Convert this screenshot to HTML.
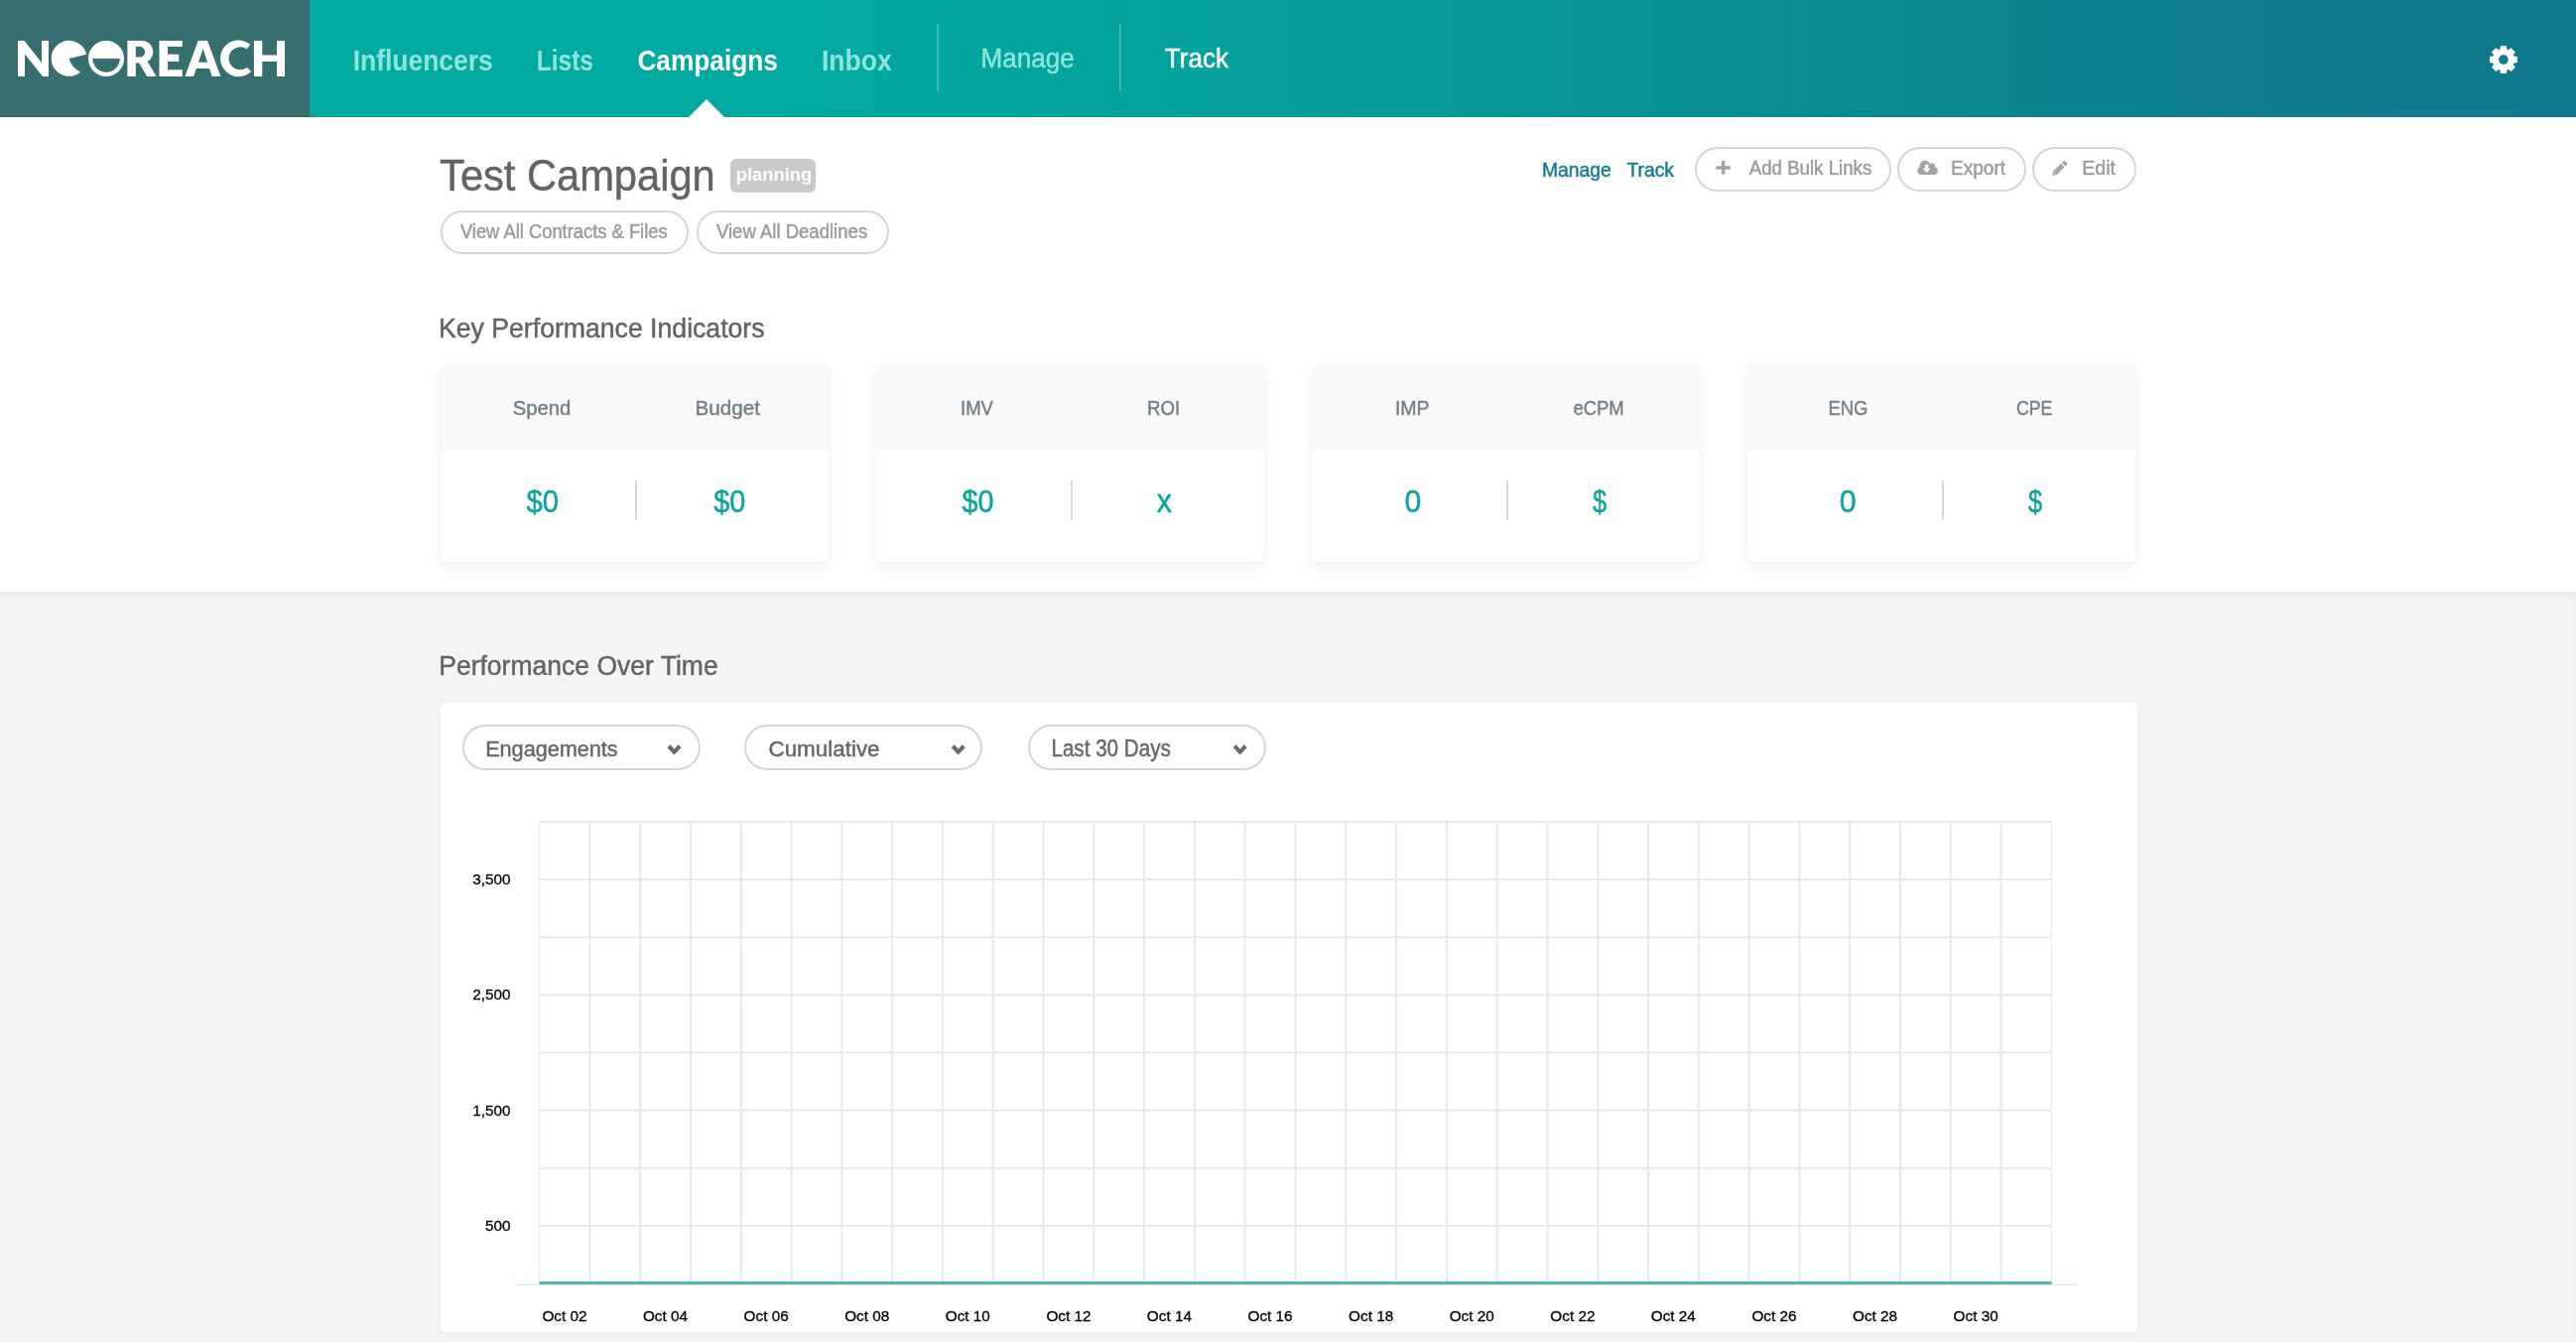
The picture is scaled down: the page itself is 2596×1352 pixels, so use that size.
<!DOCTYPE html>
<html><head><meta charset="utf-8"><title>NeoReach - Test Campaign</title>
<style>
html,body{margin:0;padding:0;width:2596px;height:1352px;overflow:hidden;background:#fff;font-family:"Liberation Sans",sans-serif}
.a{position:absolute}
.pill{position:absolute;box-sizing:border-box;border:2px solid #d5d5d5;border-radius:40px;background:#fff}
.card{position:absolute;width:391px;height:198px;top:368px;border-radius:5px;background:#fff;box-shadow:0 5px 12px rgba(0,0,0,0.06),0 1px 3px rgba(0,0,0,0.03);overflow:hidden}
.card .hd{position:absolute;left:0;top:0;width:100%;height:86px;background:#f9f9f9}
.card .sep{position:absolute;left:196px;top:116px;width:2px;height:40px;background:#d6d6d6}
</style></head><body>
<div class="a" style="left:0;top:0;width:2596px;height:118px;background:linear-gradient(90deg,#00aaa0 0px,#00aaa0 780px,#05a09b 1300px,#0b8a93 1900px,#0f7c8e 2300px,#10798d 2596px)"></div>
<div class="a" style="left:0;top:117px;width:2596px;height:1px;background:rgba(0,0,0,0.06)"></div>
<div class="a" style="left:0;top:0;width:312px;height:118px;background:#376f71"></div>
<div class="a" style="left:0;top:117px;width:312px;height:1px;background:#2b6063"></div>
<div class="a" style="left:944px;top:24px;width:2px;height:68px;background:rgba(255,255,255,0.22)"></div>
<div class="a" style="left:1128px;top:24px;width:2px;height:68px;background:rgba(255,255,255,0.22)"></div>

<div class="a" style="left:0;top:596px;width:2596px;height:756px;background:#f4f4f4;box-shadow:inset 0 6px 8px -4px rgba(0,0,0,0.08)"></div>

<div class="a" style="left:736px;top:160px;width:86px;height:34px;border-radius:6px;background:#cacaca"></div>
<div class="pill" style="left:444px;top:212px;width:250px;height:44px"></div>
<div class="pill" style="left:702px;top:212px;width:194px;height:44px"></div>
<div class="pill" style="left:1708px;top:148px;width:198px;height:45px"></div>
<div class="pill" style="left:1912px;top:148px;width:130px;height:45px"></div>
<div class="pill" style="left:2048px;top:148px;width:105px;height:45px"></div>

<div class="card" style="left:444px"><div class="hd"></div><div class="sep"></div></div>
<div class="card" style="left:883px"><div class="hd"></div><div class="sep"></div></div>
<div class="card" style="left:1322px"><div class="hd"></div><div class="sep"></div></div>
<div class="card" style="left:1761px"><div class="hd"></div><div class="sep"></div></div>

<div class="a" style="left:444px;top:708px;width:1710px;height:634px;background:#fff;border-radius:5px;box-shadow:0 3px 6px rgba(0,0,0,0.05)"></div>
<div class="pill" style="left:466px;top:730px;width:240px;height:46px"></div>
<div class="pill" style="left:750px;top:730px;width:240px;height:46px"></div>
<div class="pill" style="left:1036px;top:730px;width:240px;height:46px"></div>

<svg class="a" style="left:0;top:0;will-change:transform" width="2596" height="1352" viewBox="0 0 2596 1352" font-family="Liberation Sans, sans-serif">
<defs>
<mask id="gm"><rect x="2490" y="30" width="70" height="60" fill="#fff"/><circle cx="2522.9" cy="60.1" r="4.8" fill="#000"/></mask>
</defs>
<!-- logo -->
<g fill="#ffffff">
<path d="M18,41 L24.5,41 L42,63.2 L42,41 L49,41 L49,77 L43,77 L25,54.5 L25,77 L18,77 Z"/>
<path d="M69.6,59 L87.2,54.8 A18 18 0 1 0 81.3,72.6 Q72.5,69 69.6,59 Z"/>
<path fill-rule="evenodd" d="M89,59 A18 18 0 1 0 125,59 A18 18 0 1 0 89,59 Z M93.4,59 L120.8,59 A13.7 13.7 0 0 1 93.4,59 Z"/>
<path fill-rule="evenodd" d="M128.4,41 H143 A11.3 11.3 0 0 1 148.6,62.1 L157.6,77 H148.2 L140.3,63.6 H136.8 V77 H128.4 Z M136.8,47.1 H141 A5.25 5.25 0 0 1 141,57.6 H136.8 Z"/>
<path d="M160.5,41 H183.7 V47.1 H169 V54.8 H180.2 V62.1 H169 V70.2 H183.7 V77 H160.5 Z"/>
<path fill-rule="evenodd" d="M199.7,41 H209.1 L222.4,77 H213.6 L211,69.1 H197.9 L195.1,77 H186.4 Z M204.6,48.9 L209.1,62.8 H200 Z"/>
<path d="M252.2,44.8 A18.35 18.35 0 1 0 253.2,72 L249,67.9 A11.5 11.5 0 1 1 248.6,49.4 Z"/>
<path d="M255.9,41 H264.3 V55.5 H279 V41 H287 V77 H279 V62.1 H264.3 V77 H255.9 Z"/>
</g>
<!-- nav caret -->
<path d="M694,118 L712,100 L730,118 Z" fill="#ffffff"/>
<!-- gear -->
<path d="M2519.36,49.68 L2519.92,46.22 L2525.88,46.22 L2526.44,49.68 L2527.76,50.23 L2530.61,48.18 L2534.82,52.39 L2532.77,55.24 L2533.32,56.56 L2536.78,57.12 L2536.78,63.08 L2533.32,63.64 L2532.77,64.96 L2534.82,67.81 L2530.61,72.02 L2527.76,69.97 L2526.44,70.52 L2525.88,73.98 L2519.92,73.98 L2519.36,70.52 L2518.04,69.97 L2515.19,72.02 L2510.98,67.81 L2513.03,64.96 L2512.48,63.64 L2509.02,63.08 L2509.02,57.12 L2512.48,56.56 L2513.03,55.24 L2510.98,52.39 L2515.19,48.18 L2518.04,50.23 Z" fill="#ffffff" mask="url(#gm)"/>
<!-- button icons -->
<g fill="#a2a2a2">
<rect x="1729.4" y="167.2" width="14.4" height="3.5" rx="0.8"/>
<rect x="1734.9" y="161.9" width="3.4" height="13.9" rx="0.8"/>
</g>
<g>
<path fill="#a2a2a2" d="M1936.3,175.9 A3.8 3.8 0 0 1 1934.6,168.6 A5.6 5.6 0 0 1 1945.3,165.4 A2.6 2.6 0 0 1 1949.6,168.3 A3.8 3.8 0 0 1 1948,175.9 Z"/>
<path fill="#ffffff" d="M1939.8,165.8 H1943.4 V169.7 H1945.4 L1941.6,174.1 L1937.6,169.7 H1939.8 Z"/>
</g>
<g transform="translate(2068.3,176.9) rotate(-45)">
<path fill="#a2a2a2" d="M0,0 L4,-2.6 L14.7,-2.6 L14.7,2.6 L4,2.6 Z"/>
<path fill="#a2a2a2" d="M15.8,-2.6 L18,-2.6 Q19.2,-2.6 19.2,-1.4 L19.2,1.4 Q19.2,2.6 18,2.6 L15.8,2.6 Z"/>
<line x1="3.7" y1="-1.3" x2="3.7" y2="1.3" stroke="#ffffff" stroke-width="0.9"/>
<line x1="5.5" y1="-1.2" x2="13.5" y2="-1.2" stroke="#b4b4b4" stroke-width="0.6"/>
</g>
<!-- chevrons -->
<g fill="#696b6b">
<path d="M672.5,753.3 L675.5,750.1 L679.5,754.8 L683.5,750.1 L686.5,753.3 L679.4,760.6 Z"/>
<path transform="translate(286.25,0)" d="M672.5,753.3 L675.5,750.1 L679.5,754.8 L683.5,750.1 L686.5,753.3 L679.4,760.6 Z"/>
<path transform="translate(570.2,0)" d="M672.5,753.3 L675.5,750.1 L679.5,754.8 L683.5,750.1 L686.5,753.3 L679.4,760.6 Z"/>
</g>
<!-- chart -->
<g stroke="#e8e8e8" stroke-width="2">
<line x1="543.6" y1="828.0" x2="2067.4" y2="828.0"/>
<line x1="543.6" y1="886.1" x2="2067.4" y2="886.1"/>
<line x1="543.6" y1="944.2" x2="2067.4" y2="944.2"/>
<line x1="543.6" y1="1002.4" x2="2067.4" y2="1002.4"/>
<line x1="543.6" y1="1060.5" x2="2067.4" y2="1060.5"/>
<line x1="543.6" y1="1118.6" x2="2067.4" y2="1118.6"/>
<line x1="543.6" y1="1176.8" x2="2067.4" y2="1176.8"/>
<line x1="543.6" y1="1234.9" x2="2067.4" y2="1234.9"/>
<line x1="543.6" y1="1293.0" x2="2067.4" y2="1293.0"/>
<line x1="543.6" y1="828" x2="543.6" y2="1293" stroke-width="1.3" stroke="#ebebeb"/>
<line x1="594.4" y1="828" x2="594.4" y2="1293"/>
<line x1="645.2" y1="828" x2="645.2" y2="1293"/>
<line x1="696.0" y1="828" x2="696.0" y2="1293"/>
<line x1="746.8" y1="828" x2="746.8" y2="1293"/>
<line x1="797.6" y1="828" x2="797.6" y2="1293"/>
<line x1="848.4" y1="828" x2="848.4" y2="1293"/>
<line x1="899.2" y1="828" x2="899.2" y2="1293"/>
<line x1="949.9" y1="828" x2="949.9" y2="1293"/>
<line x1="1000.7" y1="828" x2="1000.7" y2="1293"/>
<line x1="1051.5" y1="828" x2="1051.5" y2="1293"/>
<line x1="1102.3" y1="828" x2="1102.3" y2="1293"/>
<line x1="1153.1" y1="828" x2="1153.1" y2="1293"/>
<line x1="1203.9" y1="828" x2="1203.9" y2="1293"/>
<line x1="1254.7" y1="828" x2="1254.7" y2="1293"/>
<line x1="1305.5" y1="828" x2="1305.5" y2="1293"/>
<line x1="1356.3" y1="828" x2="1356.3" y2="1293"/>
<line x1="1407.1" y1="828" x2="1407.1" y2="1293"/>
<line x1="1457.9" y1="828" x2="1457.9" y2="1293"/>
<line x1="1508.7" y1="828" x2="1508.7" y2="1293"/>
<line x1="1559.5" y1="828" x2="1559.5" y2="1293"/>
<line x1="1610.3" y1="828" x2="1610.3" y2="1293"/>
<line x1="1661.1" y1="828" x2="1661.1" y2="1293"/>
<line x1="1711.8" y1="828" x2="1711.8" y2="1293"/>
<line x1="1762.6" y1="828" x2="1762.6" y2="1293"/>
<line x1="1813.4" y1="828" x2="1813.4" y2="1293"/>
<line x1="1864.2" y1="828" x2="1864.2" y2="1293"/>
<line x1="1915.0" y1="828" x2="1915.0" y2="1293"/>
<line x1="1965.8" y1="828" x2="1965.8" y2="1293"/>
<line x1="2016.6" y1="828" x2="2016.6" y2="1293"/>
<line x1="2067.4" y1="828" x2="2067.4" y2="1293" stroke-width="1.3" stroke="#ebebeb"/>
</g>
<line x1="519" y1="1294.2" x2="2094" y2="1294.2" stroke="#bfe6df" stroke-width="1"/>
<line x1="543.6" y1="1292.6" x2="2067.4" y2="1292.6" stroke="#56b7a5" stroke-width="3"/>
<g font-family="Liberation Sans, sans-serif">
<text x="355.73" y="70.60" font-size="29.94" font-weight="bold" fill="#8ee4da" textLength="140.95" lengthAdjust="spacingAndGlyphs">Influencers</text>
<text x="540.86" y="70.60" font-size="29.94" font-weight="bold" fill="#8ee4da" textLength="57.04" lengthAdjust="spacingAndGlyphs">Lists</text>
<text x="642.42" y="70.60" font-size="30.31" font-weight="bold" fill="#ffffff" textLength="141.41" lengthAdjust="spacingAndGlyphs">Campaigns</text>
<text x="827.97" y="70.60" font-size="29.94" font-weight="bold" fill="#8ee4da" textLength="70.75" lengthAdjust="spacingAndGlyphs">Inbox</text>
<text x="988.46" y="67.75" font-size="27.25" font-weight="normal" fill="#8ee4da" stroke="#8ee4da" stroke-width="0.45" textLength="94.28" lengthAdjust="spacingAndGlyphs">Manage</text>
<text x="1173.83" y="67.75" font-size="27.25" font-weight="normal" fill="#ffffff" stroke="#ffffff" stroke-width="0.45" textLength="64.14" lengthAdjust="spacingAndGlyphs">Track</text>
<text x="443.08" y="191.90" font-size="43.60" font-weight="normal" fill="#636363" stroke="#636363" stroke-width="0.45" textLength="277.62" lengthAdjust="spacingAndGlyphs">Test Campaign</text>
<text x="741.79" y="181.90" font-size="19.17" font-weight="bold" fill="#ffffff" textLength="76.34" lengthAdjust="spacingAndGlyphs">planning</text>
<text x="463.91" y="240.00" font-size="20.35" font-weight="normal" fill="#9a9a9a" stroke="#9a9a9a" stroke-width="0.45" textLength="208.74" lengthAdjust="spacingAndGlyphs">View All Contracts & Files</text>
<text x="721.91" y="240.00" font-size="20.35" font-weight="normal" fill="#9a9a9a" stroke="#9a9a9a" stroke-width="0.45" textLength="152.25" lengthAdjust="spacingAndGlyphs">View All Deadlines</text>
<text x="1554.02" y="177.50" font-size="19.62" font-weight="normal" fill="#127c8c" stroke="#127c8c" stroke-width="0.45" textLength="69.83" lengthAdjust="spacingAndGlyphs">Manage</text>
<text x="1639.58" y="177.50" font-size="19.62" font-weight="normal" fill="#127c8c" stroke="#127c8c" stroke-width="0.45" textLength="47.40" lengthAdjust="spacingAndGlyphs">Track</text>
<text x="1762.71" y="176.00" font-size="20.35" font-weight="normal" fill="#9a9a9a" stroke="#9a9a9a" stroke-width="0.45" textLength="123.56" lengthAdjust="spacingAndGlyphs">Add Bulk Links</text>
<text x="1965.93" y="176.00" font-size="20.35" font-weight="normal" fill="#9a9a9a" stroke="#9a9a9a" stroke-width="0.45" textLength="55.20" lengthAdjust="spacingAndGlyphs">Export</text>
<text x="2098.14" y="176.00" font-size="20.35" font-weight="normal" fill="#9a9a9a" stroke="#9a9a9a" stroke-width="0.45" textLength="33.90" lengthAdjust="spacingAndGlyphs">Edit</text>
<text x="442.02" y="340.00" font-size="27.76" font-weight="normal" fill="#636363" stroke="#636363" stroke-width="0.45" textLength="328.54" lengthAdjust="spacingAndGlyphs">Key Performance Indicators</text>
<text x="516.67" y="417.80" font-size="21.08" font-weight="normal" fill="#717f89" stroke="#717f89" stroke-width="0.45" textLength="58.54" lengthAdjust="spacingAndGlyphs">Spend</text>
<text x="700.51" y="417.80" font-size="21.08" font-weight="normal" fill="#717f89" stroke="#717f89" stroke-width="0.45" textLength="65.43" lengthAdjust="spacingAndGlyphs">Budget</text>
<text x="968.05" y="417.80" font-size="21.08" font-weight="normal" fill="#717f89" stroke="#717f89" stroke-width="0.45" textLength="32.84" lengthAdjust="spacingAndGlyphs">IMV</text>
<text x="1156.07" y="417.80" font-size="21.08" font-weight="normal" fill="#717f89" stroke="#717f89" stroke-width="0.45" textLength="33.14" lengthAdjust="spacingAndGlyphs">ROI</text>
<text x="1405.90" y="417.80" font-size="21.08" font-weight="normal" fill="#717f89" stroke="#717f89" stroke-width="0.45" textLength="34.73" lengthAdjust="spacingAndGlyphs">IMP</text>
<text x="1585.53" y="417.80" font-size="21.08" font-weight="normal" fill="#717f89" stroke="#717f89" stroke-width="0.45" textLength="51.19" lengthAdjust="spacingAndGlyphs">eCPM</text>
<text x="1842.38" y="417.80" font-size="21.08" font-weight="normal" fill="#717f89" stroke="#717f89" stroke-width="0.45" textLength="40.11" lengthAdjust="spacingAndGlyphs">ENG</text>
<text x="2031.90" y="417.80" font-size="21.08" font-weight="normal" fill="#717f89" stroke="#717f89" stroke-width="0.45" textLength="36.37" lengthAdjust="spacingAndGlyphs">CPE</text>
<text x="530.43" y="515.90" font-size="32.09" font-weight="normal" fill="#0aa69c" stroke="#0aa69c" stroke-width="0.45" textLength="32.52" lengthAdjust="spacingAndGlyphs">$0</text>
<text x="719.18" y="515.90" font-size="32.09" font-weight="normal" fill="#0aa69c" stroke="#0aa69c" stroke-width="0.45" textLength="32.15" lengthAdjust="spacingAndGlyphs">$0</text>
<text x="969.43" y="515.90" font-size="32.09" font-weight="normal" fill="#0aa69c" stroke="#0aa69c" stroke-width="0.45" textLength="32.00" lengthAdjust="spacingAndGlyphs">$0</text>
<text x="1165.64" y="515.90" font-size="32.39" font-weight="normal" fill="#0aa69c" stroke="#0aa69c" stroke-width="0.45" textLength="15.20" lengthAdjust="spacingAndGlyphs">x</text>
<text x="1415.43" y="515.90" font-size="32.09" font-weight="normal" fill="#0aa69c" stroke="#0aa69c" stroke-width="0.45" textLength="16.75" lengthAdjust="spacingAndGlyphs">0</text>
<text x="1605.12" y="515.90" font-size="32.09" font-weight="normal" fill="#0aa69c" stroke="#0aa69c" stroke-width="0.45" textLength="14.19" lengthAdjust="spacingAndGlyphs">$</text>
<text x="1853.82" y="515.90" font-size="32.09" font-weight="normal" fill="#0aa69c" stroke="#0aa69c" stroke-width="0.45" textLength="16.87" lengthAdjust="spacingAndGlyphs">0</text>
<text x="2043.92" y="515.90" font-size="32.09" font-weight="normal" fill="#0aa69c" stroke="#0aa69c" stroke-width="0.45" textLength="14.19" lengthAdjust="spacingAndGlyphs">$</text>
<text x="442.23" y="680.00" font-size="27.62" font-weight="normal" fill="#636363" stroke="#636363" stroke-width="0.45" textLength="281.45" lengthAdjust="spacingAndGlyphs">Performance Over Time</text>
<text x="489.13" y="761.50" font-size="22.53" font-weight="normal" fill="#666666" stroke="#666666" stroke-width="0.45" textLength="133.55" lengthAdjust="spacingAndGlyphs">Engagements</text>
<text x="774.46" y="761.50" font-size="22.53" font-weight="normal" fill="#666666" stroke="#666666" stroke-width="0.45" textLength="112.13" lengthAdjust="spacingAndGlyphs">Cumulative</text>
<text x="1059.41" y="761.90" font-size="23.11" font-weight="normal" fill="#666666" stroke="#666666" stroke-width="0.45" textLength="120.44" lengthAdjust="spacingAndGlyphs">Last 30 Days</text>
<text x="476.32" y="891.16" font-size="15.30" font-weight="normal" fill="#000000" stroke="#000000" stroke-width="0.3" textLength="38.29" lengthAdjust="spacingAndGlyphs">3,500</text>
<text x="476.32" y="1007.41" font-size="15.30" font-weight="normal" fill="#000000" stroke="#000000" stroke-width="0.3" textLength="38.29" lengthAdjust="spacingAndGlyphs">2,500</text>
<text x="476.32" y="1123.66" font-size="15.30" font-weight="normal" fill="#000000" stroke="#000000" stroke-width="0.3" textLength="38.29" lengthAdjust="spacingAndGlyphs">1,500</text>
<text x="489.08" y="1239.91" font-size="15.30" font-weight="normal" fill="#000000" stroke="#000000" stroke-width="0.3" textLength="25.53" lengthAdjust="spacingAndGlyphs">500</text>
<text x="546.48" y="1331.18" font-size="15.30" font-weight="normal" fill="#000000" stroke="#000000" stroke-width="0.3" textLength="45.07" lengthAdjust="spacingAndGlyphs">Oct 02</text>
<text x="647.91" y="1331.18" font-size="15.30" font-weight="normal" fill="#000000" stroke="#000000" stroke-width="0.3" textLength="45.07" lengthAdjust="spacingAndGlyphs">Oct 04</text>
<text x="749.61" y="1331.18" font-size="15.30" font-weight="normal" fill="#000000" stroke="#000000" stroke-width="0.3" textLength="45.07" lengthAdjust="spacingAndGlyphs">Oct 06</text>
<text x="851.19" y="1331.18" font-size="15.30" font-weight="normal" fill="#000000" stroke="#000000" stroke-width="0.3" textLength="45.07" lengthAdjust="spacingAndGlyphs">Oct 08</text>
<text x="952.75" y="1331.18" font-size="15.30" font-weight="normal" fill="#000000" stroke="#000000" stroke-width="0.3" textLength="45.07" lengthAdjust="spacingAndGlyphs">Oct 10</text>
<text x="1054.42" y="1331.18" font-size="15.30" font-weight="normal" fill="#000000" stroke="#000000" stroke-width="0.3" textLength="45.07" lengthAdjust="spacingAndGlyphs">Oct 12</text>
<text x="1155.84" y="1331.18" font-size="15.30" font-weight="normal" fill="#000000" stroke="#000000" stroke-width="0.3" textLength="45.07" lengthAdjust="spacingAndGlyphs">Oct 14</text>
<text x="1257.54" y="1331.18" font-size="15.30" font-weight="normal" fill="#000000" stroke="#000000" stroke-width="0.3" textLength="45.07" lengthAdjust="spacingAndGlyphs">Oct 16</text>
<text x="1359.12" y="1331.18" font-size="15.30" font-weight="normal" fill="#000000" stroke="#000000" stroke-width="0.3" textLength="45.07" lengthAdjust="spacingAndGlyphs">Oct 18</text>
<text x="1460.68" y="1331.18" font-size="15.30" font-weight="normal" fill="#000000" stroke="#000000" stroke-width="0.3" textLength="45.07" lengthAdjust="spacingAndGlyphs">Oct 20</text>
<text x="1562.35" y="1331.18" font-size="15.30" font-weight="normal" fill="#000000" stroke="#000000" stroke-width="0.3" textLength="45.07" lengthAdjust="spacingAndGlyphs">Oct 22</text>
<text x="1663.78" y="1331.18" font-size="15.30" font-weight="normal" fill="#000000" stroke="#000000" stroke-width="0.3" textLength="45.07" lengthAdjust="spacingAndGlyphs">Oct 24</text>
<text x="1765.48" y="1331.18" font-size="15.30" font-weight="normal" fill="#000000" stroke="#000000" stroke-width="0.3" textLength="45.07" lengthAdjust="spacingAndGlyphs">Oct 26</text>
<text x="1867.06" y="1331.18" font-size="15.30" font-weight="normal" fill="#000000" stroke="#000000" stroke-width="0.3" textLength="45.07" lengthAdjust="spacingAndGlyphs">Oct 28</text>
<text x="1968.61" y="1331.18" font-size="15.30" font-weight="normal" fill="#000000" stroke="#000000" stroke-width="0.3" textLength="45.07" lengthAdjust="spacingAndGlyphs">Oct 30</text>
</g>
</svg>
</body></html>
